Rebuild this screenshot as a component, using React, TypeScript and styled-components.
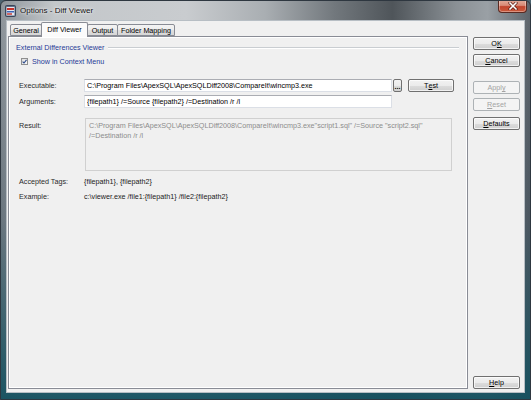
import React from "react";
import styled, { createGlobalStyle } from "styled-components";

const Global = createGlobalStyle`
  html, body { margin: 0; padding: 0; width: 531px; height: 400px; overflow: hidden; background: #4d6470; }
  * { box-sizing: border-box; }
`;

const FONT = `"Liberation Sans", Arial, sans-serif`;

const Window = styled.div`
  width: 531px;
  height: 400px;
  display: flex;
  flex-direction: column;
  font-family: ${FONT};
  font-size: 7.2px;
  color: #1a1a1a;
  border: 1px solid #2e3740;
  border-radius: 6px 6px 0 0;
  overflow: hidden;
  background:
    linear-gradient(180deg, rgba(0,0,0,0) 0, rgba(0,0,0,0) 20px, rgba(40,60,75,0.35) 55%, rgba(20,80,95,0.95) 100%),
    linear-gradient(90deg, #8d949a 0%, #c3c7ca 10%, #c9cccf 35%, #a9aeb2 50%, #72787d 63%, #4f555a 74%, #8a9095 86%, #9aa0a5 92%, #5d646b 100%);
`;

const TitleBar = styled.div`
  height: 19px;
  display: flex;
  align-items: center;
  padding-left: 4px;
  flex-shrink: 0;
`;

const TitleText = styled.span`
  margin-left: 4px;
  font-size: 8px;
  color: #111;
  text-shadow: 0 0 4px rgba(255,255,255,0.9), 0 0 2px rgba(255,255,255,0.9);
`;

const CloseButton = styled.div`
  margin-left: auto;
  margin-right: 3px;
  align-self: flex-start;
  margin-top: -1px;
  width: 29px;
  height: 13px;
  border: 1px solid #5a2a22;
  border-top: none;
  border-radius: 0 0 4px 4px;
  background: linear-gradient(180deg, #e2ac9c 0%, #d88a76 45%, #c2452e 55%, #c95a3c 100%);
  display: flex;
  align-items: center;
  justify-content: center;
  box-shadow: inset 0 0 0 1px rgba(255,255,255,0.35);
`;

const Client = styled.div`
  flex: 1;
  margin: 0 5px 6px 5px;
  border: 1px solid #b7bec4;
  background: #f0f0f0;
  display: flex;
  min-height: 0;
`;

const MainArea = styled.div`
  width: 461px;
  padding: 1px 0 3px 1px;
  display: flex;
  flex-direction: column;
`;

const TabStrip = styled.div`
  height: 14px;
  display: flex;
  align-items: flex-end;
  padding-left: 3px;
  position: relative;
  z-index: 1;
`;

const Tab = styled.div<{ $w: number; $active?: boolean }>`
  width: ${(p) => p.$w}px;
  height: ${(p) => (p.$active ? 15 : 12)}px;
  margin-bottom: ${(p) => (p.$active ? -1 : 0)}px;
  margin-left: -1px;
  border: 1px solid #898c95;
  border-bottom: ${(p) => (p.$active ? "none" : "1px solid #898c95")};
  border-radius: 2px 2px 0 0;
  background: ${(p) =>
    p.$active
      ? "#fbfbfb"
      : "linear-gradient(180deg, #f4f4f4 0%, #ececec 50%, #e0e0e0 51%, #d6d6d6 100%)"};
  display: flex;
  align-items: center;
  justify-content: center;
  color: #000;
  white-space: nowrap;
  position: relative;
  z-index: ${(p) => (p.$active ? 2 : 1)};
  padding-bottom: ${(p) => (p.$active ? 2 : 0)}px;
`;

const TabPanel = styled.div`
  flex: 1;
  border: 1px solid #898c95;
  box-shadow: inset 1px 1px 0 #fff, inset -1px -1px 0 #fff;
  background: #f0f0f0;
  padding: 6px 8px 0 7px;
  display: flex;
  flex-direction: column;
`;

const GroupHeader = styled.div`
  height: 9px;
  display: flex;
  align-items: center;
  gap: 4px;
  color: #1e3a96;
`;

const GroupLine = styled.div`
  flex: 1;
  height: 1px;
  background: #c9cdd1;
  box-shadow: 0 1px 0 #fff;
`;

const CheckRow = styled.div`
  margin-top: 5px;
  margin-left: 5px;
  height: 9px;
  display: flex;
  align-items: center;
  gap: 4px;
  color: #1e3a96;
`;

const CheckBox = styled.div`
  width: 7px;
  height: 7px;
  border: 1px solid #8e8f8f;
  background: linear-gradient(135deg, #dcdcdc, #fbfbfb);
  display: flex;
  align-items: center;
  justify-content: center;
`;

const Row = styled.div<{ $mt: number; $h: number; $top?: boolean }>`
  margin-top: ${(p) => p.$mt}px;
  margin-left: 3px;
  height: ${(p) => p.$h}px;
  display: flex;
  align-items: ${(p) => (p.$top ? "flex-start" : "center")};
`;

const Label = styled.div<{ $pt?: number }>`
  width: 65px;
  flex-shrink: 0;
  color: #2a2a2a;
  padding-top: ${(p) => p.$pt ?? 0}px;
`;

const Input = styled.input`
  width: 308px;
  height: 13px;
  border: 1px solid #dbdfe6;
  border-top-color: #abadb3;
  background: #fff;
  font-family: ${FONT};
  font-size: 7.2px;
  color: #000;
  padding: 0 2px;
  margin: 0;
  outline: none;
`;

const SmallButton = styled.button`
  margin-left: 1px;
  width: 9px;
  height: 13px;
  padding: 0;
  border: 1px solid #707070;
  border-radius: 2px;
  background: linear-gradient(180deg, #f2f2f2 0%, #ebebeb 50%, #dddddd 51%, #cfcfcf 100%);
  font-family: ${FONT};
  font-size: 7px;
  font-weight: bold;
  line-height: 14px;
  color: #000;
`;

const PushButton = styled.button<{ $w?: number; $mt?: number }>`
  width: ${(p) => p.$w ?? 47}px;
  height: 13px;
  margin: ${(p) => p.$mt ?? 0}px 0 0 0;
  padding: 0;
  flex-shrink: 0;
  border: 1px solid #707070;
  border-radius: 2px;
  background: linear-gradient(180deg, #f2f2f2 0%, #ebebeb 50%, #dddddd 51%, #cfcfcf 100%);
  box-shadow: inset 0 0 0 1px rgba(255,255,255,0.7);
  font-family: ${FONT};
  font-size: 7.2px;
  color: #000;
  display: flex;
  align-items: center;
  justify-content: center;
  &:disabled {
    border-color: #adb2b5;
    background: #f4f4f4;
    color: #a3a3a3;
    box-shadow: none;
  }
`;

const TestButton = styled(PushButton)`
  margin-left: 6px;
`;

const ResultBox = styled.div`
  width: 367px;
  height: 53px;
  margin-left: 1px;
  border: 1px solid #d0d0d0;
  background: #f0f0f0;
  color: #8c8c8c;
  padding: 2px 3px;
  line-height: 9.5px;
`;

const Value = styled.div`
  color: #1a1a1a;
`;

const ButtonColumn = styled.div`
  width: 47px;
  margin: 0 4px 3px 5px;
  padding-top: 16px;
  display: flex;
  flex-direction: column;
`;

const Spacer = styled.div`
  flex: 1;
`;

const TitleIcon = () => (
  <svg width="11" height="12" viewBox="0 0 11 12">
    <rect x="0.5" y="0.5" width="10" height="11" rx="1" fill="#5d6f8a" stroke="#3b4658" />
    <rect x="1.5" y="2" width="8" height="8.5" fill="#e8e8ee" />
    <rect x="2" y="3" width="7" height="2" fill="#c8322a" />
    <rect x="2" y="6" width="7" height="1.5" fill="#3a66b8" />
    <rect x="2" y="8.3" width="5" height="1.4" fill="#c8322a" />
  </svg>
);

const CloseGlyph = () => (
  <svg width="10" height="8" viewBox="0 0 10 8">
    <path d="M2 1 L8 7 M8 1 L2 7" stroke="#5a1a10" strokeWidth="3" strokeLinecap="square" />
    <path d="M2 1 L8 7 M8 1 L2 7" stroke="#ffffff" strokeWidth="1.6" strokeLinecap="square" />
  </svg>
);

const CheckMark = () => (
  <svg width="5" height="5" viewBox="0 0 5 5">
    <path d="M0.6 2.6 L2 4 L4.5 0.8" stroke="#2c4a8a" strokeWidth="1.1" fill="none" />
  </svg>
);

export default function App() {
  return (
    <>
      <Global />
      <Window>
        <TitleBar>
          <TitleIcon />
          <TitleText>Options - Diff Viewer</TitleText>
          <CloseButton>
            <CloseGlyph />
          </CloseButton>
        </TitleBar>
        <Client>
          <MainArea>
            <TabStrip>
              <Tab $w={32}>General</Tab>
              <Tab $w={47} $active>Diff Viewer</Tab>
              <Tab $w={31}>Output</Tab>
              <Tab $w={58}>Folder Mapping</Tab>
            </TabStrip>
            <TabPanel>
              <GroupHeader>
                <span>External Differences Viewer</span>
                <GroupLine />
              </GroupHeader>
              <CheckRow>
                <CheckBox>
                  <CheckMark />
                </CheckBox>
                <span>Show in Context Menu</span>
              </CheckRow>
              <Row $mt={13} $h={13}>
                <Label>Executable:</Label>
                <Input readOnly value="C:\Program Files\ApexSQL\ApexSQLDiff2008\CompareIt\wincmp3.exe" />
                <SmallButton>...</SmallButton>
                <TestButton $w={46}>
                  T<u>e</u>st
                </TestButton>
              </Row>
              <Row $mt={3} $h={13}>
                <Label>Arguments:</Label>
                <Input readOnly value="{filepath1} /=Source {filepath2} /=Destination /r /l" />
              </Row>
              <Row $mt={10} $h={53} $top>
                <Label $pt={3}>Result:</Label>
                <ResultBox>
                  C:\Program Files\ApexSQL\ApexSQLDiff2008\CompareIt\wincmp3.exe"script1.sql" /=Source "script2.sql"
                  <br />
                  /=Destination /r /l
                </ResultBox>
              </Row>
              <Row $mt={4} $h={12}>
                <Label>Accepted Tags:</Label>
                <Value>{"{filepath1}, {filepath2}"}</Value>
              </Row>
              <Row $mt={3} $h={12}>
                <Label>Example:</Label>
                <Value>{"c:\\viewer.exe /file1:{filepath1} /file2:{filepath2}"}</Value>
              </Row>
            </TabPanel>
          </MainArea>
          <ButtonColumn>
            <PushButton>
              O<u>K</u>
            </PushButton>
            <PushButton $mt={4}>
              <u>C</u>ancel
            </PushButton>
            <PushButton $mt={14} disabled>
              Appl<u>y</u>
            </PushButton>
            <PushButton $mt={4} disabled>
              <u>R</u>eset
            </PushButton>
            <PushButton $mt={6}>
              <u>D</u>efaults
            </PushButton>
            <Spacer />
            <PushButton>
              <u>H</u>elp
            </PushButton>
          </ButtonColumn>
        </Client>
      </Window>
    </>
  );
}
